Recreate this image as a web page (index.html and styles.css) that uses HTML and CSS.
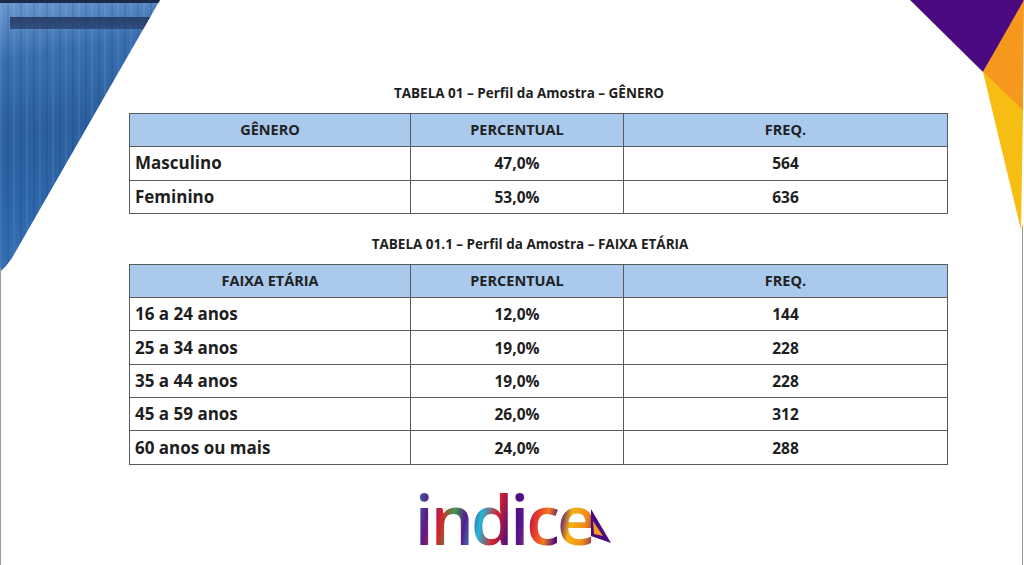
FILE: index.html
```html
<!DOCTYPE html>
<html lang="pt-BR">
<head>
<meta charset="utf-8">
<title>Perfil da Amostra</title>
<link rel="stylesheet" href="styles.css">
</head>
<body>
<div class="page">
  <div class="deco-left" aria-hidden="true">
    <div class="beam"></div>
  </div>
  <div class="edge-left" aria-hidden="true"></div>
  <div class="edge-right" aria-hidden="true"></div>
  <svg class="deco-right" width="114" height="232" viewBox="0 0 114 232" aria-hidden="true">
    <polygon points="0,0 114,0 113,4 73,72" fill="#4b0a7f"/>
    <polygon points="73,72 114,0 113,112" fill="#f6971e"/>
    <polygon points="73,72 113,110 111,230" fill="#f6bd12"/>
  </svg>

  <main class="content">
    <h2 class="title">TABELA 01 – Perfil da Amostra – GÊNERO</h2>
    <table class="data">
      <colgroup><col class="c1"><col class="c2"><col class="c3"></colgroup>
      <thead><tr><th>GÊNERO</th><th>PERCENTUAL</th><th>FREQ.</th></tr></thead>
      <tbody>
        <tr><td class="label">Masculino</td><td>47,0%</td><td>564</td></tr>
        <tr><td class="label">Feminino</td><td>53,0%</td><td>636</td></tr>
      </tbody>
    </table>

    <h2 class="title t2">TABELA 01.1 – Perfil da Amostra – FAIXA ETÁRIA</h2>
    <table class="data">
      <colgroup><col class="c1"><col class="c2"><col class="c3"></colgroup>
      <thead><tr><th>FAIXA ETÁRIA</th><th>PERCENTUAL</th><th>FREQ.</th></tr></thead>
      <tbody>
        <tr><td class="label">16 a 24 anos</td><td>12,0%</td><td>144</td></tr>
        <tr><td class="label">25 a 34 anos</td><td>19,0%</td><td>228</td></tr>
        <tr><td class="label">35 a 44 anos</td><td>19,0%</td><td>228</td></tr>
        <tr><td class="label">45 a 59 anos</td><td>26,0%</td><td>312</td></tr>
        <tr><td class="label">60 anos ou mais</td><td>24,0%</td><td>288</td></tr>
      </tbody>
    </table>
  </main>

  <footer class="logo-wrap">
    <div class="logo">
      <span class="logo-text">indice</span>
      <svg class="logo-tip" width="22" height="42" viewBox="0 0 22 42" aria-hidden="true">
        <polygon points="0,4 20,38 0,31" fill="#4b0a7f"/>
        <polygon points="2,16 12,31 3,29" fill="#f6971e"/>
      </svg>
    </div>
  </footer>
</div>
</body>
</html>
```

FILE: styles.css
```css
* { box-sizing: border-box; }

html, body {
  margin: 0;
  padding: 0;
  background: #ffffff;
}

body {
  font-family: "Open Sans", "Liberation Sans", sans-serif;
  color: #1e1e1e;
}

.page {
  position: relative;
  width: 1024px;
  height: 565px;
  overflow: hidden;
  background: #ffffff;
}

/* decorations */
.deco-left {
  position: absolute;
  left: 0;
  top: 0;
  width: 162px;
  height: 272px;
  clip-path: polygon(0 0, 160px 0, 12px 258px, 6px 266px, 0 272px);
  background:
    linear-gradient(to bottom, #1a2a48 0, #1a2a48 3px, transparent 3px),
    repeating-linear-gradient(90deg, rgba(255,255,255,0.07) 0 2px, rgba(0,0,0,0) 2px 7px, rgba(10,30,70,0.12) 7px 9px, rgba(0,0,0,0) 9px 13px),
    linear-gradient(170deg, #6d9ad0 0%, #3a70b2 20%, #2b5f9f 45%, #2d66aa 70%, #3a74b8 100%);
}

.deco-left .beam {
  margin: 17px 0 0 10px;
  width: 150px;
  height: 12px;
  background: linear-gradient(to bottom, #22365e, #2a4474);
  opacity: 0.85;
}

.edge-left {
  position: absolute;
  left: 0;
  top: 268px;
  width: 1px;
  height: 297px;
  background: #9a9a9a;
}

.edge-right {
  position: absolute;
  right: 1px;
  top: 226px;
  width: 1px;
  height: 339px;
  background: #9a9a9a;
}

.deco-right {
  position: absolute;
  right: 0;
  top: 0;
}

/* content */
.content {
  display: flex;
  flex-direction: column;
  margin-left: 129px;
  width: 818px;
  padding-top: 84px;
}

.title {
  margin: 0;
  padding-right: 18px;
  text-align: center;
  font-size: 13.5px;
  font-weight: 700;
  line-height: 18px;
  color: #1e1e1e;
}

.title.t2 {
  margin-top: 21px;
  padding-right: 16px;
}

.data {
  margin-top: 11px;
  width: 818px;
  border-collapse: collapse;
  table-layout: fixed;
}

.data .c1 { width: 281px; }
.data .c2 { width: 213px; }
.data .c3 { width: 324px; }

.data th,
.data td {
  border: 1px solid #5a5a5a;
  height: 33.3px;
  padding: 0 5px;
  text-align: center;
  vertical-align: middle;
  line-height: 20px;
}

.data th {
  background: #a9c9ed;
  font-size: 14.5px;
  font-weight: 700;
  color: #222;
}

.data td {
  font-size: 15.5px;
  font-weight: 700;
  color: #1e1e1e;
}

.data td.label {
  text-align: left;
  font-size: 17px;
}

/* logo */
.logo-wrap {
  display: flex;
  justify-content: center;
  margin-top: 14px;
  padding-left: 2px;
}

.logo {
  position: relative;
  display: flex;
  align-items: flex-end;
}

.logo-text {
  display: block;
  padding: 0 2px 2px 2px;
  font-family: "Open Sans", sans-serif;
  font-size: 68px;
  font-weight: 600;
  line-height: 80px;
  letter-spacing: -3px;
  background: linear-gradient(100deg,
    #1fa7a0 0%, #5a1a8c 10%, #d8232a 18%, #3a9f4a 24%, #5a1a8c 30%,
    #22b7d6 38%, #d8232a 46%, #4b0a7f 54%, #5a1a8c 60%,
    #e8322c 66%, #f07a1c 72%, #4b0a7f 78%, #f6b312 84%, #f08a1a 92%, #4b0a7f 100%);
  -webkit-background-clip: text;
  background-clip: text;
  color: transparent;
}

.logo-tip {
  margin-left: -4px;
  margin-bottom: 14px;
}
```
